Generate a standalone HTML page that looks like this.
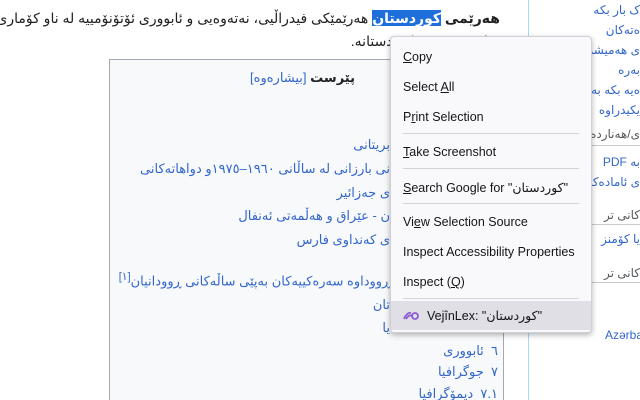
<!DOCTYPE html>
<html><head><meta charset="utf-8"><style>
*{margin:0;padding:0;box-sizing:border-box}
html,body{width:640px;height:400px;overflow:hidden}
body{background:#fff;position:relative;font-family:"Liberation Sans","DejaVu Sans",sans-serif;color:#202122}
.a{position:absolute;white-space:nowrap}
.r{direction:rtl;text-align:right}
.l{color:#3366cc}
.t{font-size:13px}
#toc{position:absolute;left:109px;top:59px;width:395px;height:341px;background:#f8f9fa;border:1px solid #a2a9b1;border-bottom:none}
#side{position:absolute;left:528px;top:0;width:112px;height:400px;border-left:1px solid #a7d7f9;background:#fff}
.hl{position:absolute;left:0;right:0;height:1px;background:#c8ccd1}
#menu{position:absolute;left:390px;top:36px;width:202px;height:297px;background:#f9f9fb;border:1px solid #cfcfd8;border-radius:4px;box-shadow:0 2px 6px rgba(0,0,0,.3);font-size:12.5px;color:#15141a}
#menu .i{position:absolute;left:12px;white-space:nowrap}
#menu .s{position:absolute;left:12px;right:12px;height:1px;background:#d4d4d8}
</style></head><body>
<div class="a r t" style="right:140px;top:10px;font-size:14px"><b>هەرێمی <span style="background:#1e6fd9;color:#fff">کوردستان</span></b> هەرێمێکی فیدراڵیی، نەتەوەیی و ئابووری ئۆتۆنۆمییە لە ناو کۆماری</div>
<div class="a r t" style="right:140px;top:33px;font-size:14px">شاری هەرێمی کوردستانە.</div>
<div id="toc"></div>
<div class="a r t" style="right:285px;top:70px"><b>پێرست</b> <span class="l">[بیشارەوە]</span></div>
<div class="a r t l" style="right:250px;top:137px">بریتانی</div>
<div class="a r t l" style="right:250px;top:161px">نی بارزانی لە ساڵانی ١٩٦٠–١٩٧٥و دواهاتەکانی</div>
<div class="a r t l" style="right:250px;top:185px">ی جەزائیر</div>
<div class="a r t l" style="right:250px;top:208px">ن - عێراق و هەڵمەتی ئەنفال</div>
<div class="a r t l" style="right:250px;top:232px">ی کەنداوی فارس</div>
<div class="a r t l" style="right:250px;top:270px">ڕووداوە سەرەکییەکان بەپێی ساڵەکانی ڕوودانیان<sup>[١]</sup></div>
<div class="a r t l" style="right:250px;top:297px">تان</div>
<div class="a r t l" style="right:250px;top:320px">یا</div>
<div class="a r t l" style="right:142px;top:343px">٦&nbsp; ئابووری</div>
<div class="a r t l" style="right:142px;top:364px">٧&nbsp; جوگرافیا</div>
<div class="a r t l" style="right:142px;top:386px">٧.١&nbsp; دیمۆگرافیا</div>
<div id="side">
<div class="a r l" style="right:0;top:0;font-size:12px;line-height:20px">ک بار بکە<br>ەتەکان<br>ی هەمیشە<br>بەرە<br>ەیە بکە بە<br>یکیدراوە</div>
<div class="a r" style="right:0;top:127px;font-size:12px;color:#54595d">ی/هەناردەکردن</div>
<div class="hl" style="top:145px"></div>
<div class="a r l" style="right:0;top:152px;font-size:12px;line-height:20px">بە PDF<br>ی ئامادەکراو</div>
<div class="a r" style="right:0;top:208px;font-size:12px;color:#54595d">کانی تر</div>
<div class="hl" style="top:224px"></div>
<div class="a r l" style="right:0;top:232px;font-size:12px">یا کۆمنز</div>
<div class="a r" style="right:0;top:266px;font-size:12px;color:#54595d">کانی تر</div>
<div class="hl" style="top:282px"></div>
<div class="a l" style="left:76px;top:328px;font-size:12px">Azərba</div>
</div>
<div id="menu">
<div class="i" style="top:13px"><u>C</u>opy</div>
<div class="i" style="top:43px">Select <u>A</u>ll</div>
<div class="i" style="top:73px">P<u>r</u>int Selection</div>
<div class="s" style="top:96px"></div>
<div class="i" style="top:108px"><u>T</u>ake Screenshot</div>
<div class="s" style="top:131px"></div>
<div class="i" style="top:143px"><u>S</u>earch Google for "<span style="font-family:'DejaVu Sans',sans-serif">کوردستان</span>"</div>
<div class="s" style="top:166px"></div>
<div class="i" style="top:178px">Vi<u>e</u>w Selection Source</div>
<div class="i" style="top:208px">Inspect Accessibility Properties</div>
<div class="i" style="top:238px">Inspect (<u>Q</u>)</div>
<div class="s" style="top:261px"></div>
<div style="position:absolute;left:0;right:0;top:264px;height:29px;background:#e0dfe6"></div>
<svg style="position:absolute;left:12px;top:273px" width="16" height="10" viewBox="0 0 16 10"><path d="M1 9 Q4 2 8 3 M3 9 Q6 4 9 6" stroke="#8a5cd6" stroke-width="1.8" fill="none"/><circle cx="12" cy="6" r="3" stroke="#8a5cd6" stroke-width="1.8" fill="none"/></svg>
<div class="i" style="left:36px;top:271px">VejînLex: "<span style="font-family:'DejaVu Sans',sans-serif">کوردستان</span>"</div>
</div>
</body></html>
